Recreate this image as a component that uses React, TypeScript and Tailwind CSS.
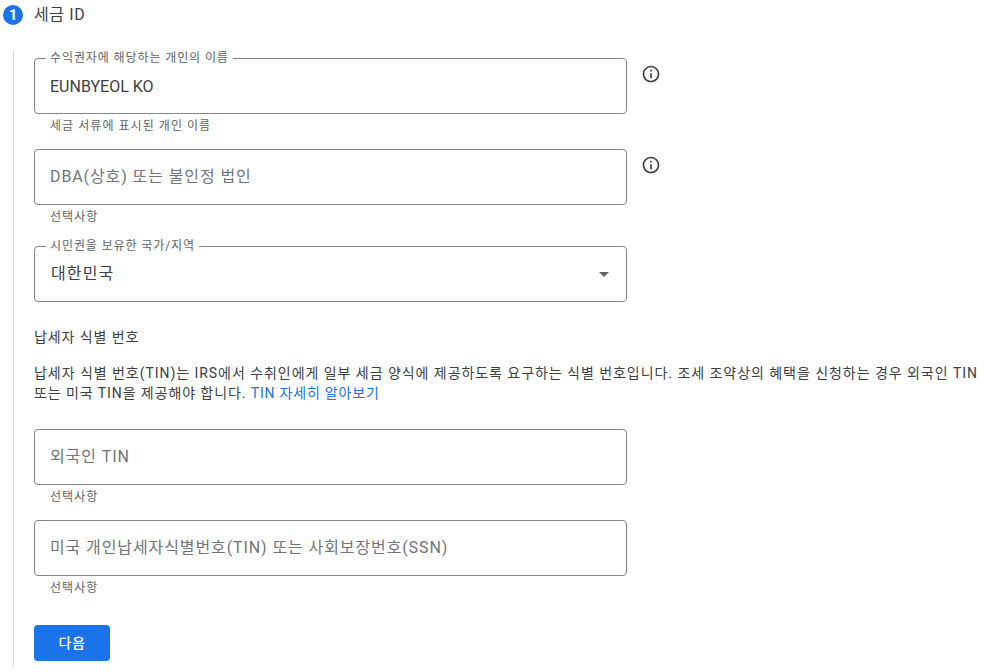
import React from 'react';

interface TaxFieldProps {
  label?: string;
  value?: string;
  placeholder?: string;
  helper?: string;
  info?: boolean;
  select?: boolean;
  className?: string;
}

const InfoIcon = () => (
  <svg width="20" height="20" viewBox="0 0 24 24" fill="#3c4043">
    <path d="M11 7h2v2h-2zm0 4h2v6h-2zm1-9C6.48 2 2 6.48 2 12s4.48 10 10 10 10-4.48 10-10S17.52 2 12 2zm0 18c-4.41 0-8-3.59-8-8s3.59-8 8-8 8 3.59 8 8-3.59 8-8 8z" />
  </svg>
);

const TaxField = ({ label, value, placeholder, helper, info, select, className }: TaxFieldProps) => (
  <div className={className}>
    <div className="flex items-start">
      <div className="relative flex h-[56px] w-[593px] items-center justify-between rounded border border-[#80868b] pl-[15px] pr-[17px]">
        {label && (
          <span className="absolute left-[11px] top-[-9px] bg-white px-[4px] text-[12px] leading-[16px] tracking-[0.9px] text-[#5f6368]">
            {label}
          </span>
        )}
        {/* the latin-only value sits 1px lower and has no extra spacing */}
        {value && !select && <span className="mt-[2px] text-[16px] leading-[24px] text-[#3c4043]">{value}</span>}
        {value && select && <span className="ml-[1px] text-[16px] leading-[24px] tracking-[1.1px] text-[#3c4043]">{value}</span>}
        {!value && <span className="text-[16px] leading-[24px] tracking-[0.9px] text-[#70757a]">{placeholder}</span>}
        {select && <span className="h-0 w-0 border-x-[5px] border-t-[5px] border-x-transparent border-t-[#5f6368]" />}
      </div>
      {info && (
        <span className="ml-[14px] mt-[6px] flex">
          <InfoIcon />
        </span>
      )}
    </div>
    {helper && <div className="mt-[4px] pl-[16px] text-[12px] leading-[16px] tracking-[1.05px] text-[#5f6368]">{helper}</div>}
  </div>
);

export default function App() {
  return (
    <div className="h-[672px] w-[984px] overflow-hidden bg-white font-['Roboto','Noto_Sans_CJK_KR',sans-serif] text-[#3c4043]">
      <div className="flex h-[30px] items-center pl-[3px]">
        <span className="flex h-[20px] w-[20px] items-center justify-center rounded-full bg-[#1a73e8] text-[15px] font-bold leading-none text-white">
          1
        </span>
        <span className="ml-[11px] text-[16px] leading-[24px] tracking-[0.6px]">세금 ID</span>
      </div>

      <div className="ml-[13px] mt-[20px] h-[617px] border-l border-[#dadce0] pl-[20px] pt-[8px]">
        <TaxField label="수익권자에 해당하는 개인의 이름" value="EUNBYEOL KO" helper="세금 서류에 표시된 개인 이름" info />
        <TaxField className="mt-[15px]" placeholder="DBA(상호) 또는 불인정 법인" helper="선택사항" info />
        <TaxField className="mt-[21px]" label="시민권을 보유한 국가/지역" value="대한민국" select />

        <div className="mt-[25px] text-[14px] leading-[20px] tracking-[0.9px]">납세자 식별 번호</div>
        <div className="mt-[16px] whitespace-nowrap text-[14px] leading-[20px] tracking-[0.95px]">
          <p>납세자 식별 번호(TIN)는 IRS에서 수취인에게 일부 세금 양식에 제공하도록 요구하는 식별 번호입니다. 조세 조약상의 혜택을 신청하는 경우 외국인 TIN</p>
          <p>
            <span className="tracking-[0.9px]">또는 미국 TIN을 제공해야 합니다.</span>{' '}
            <a className="tracking-[0.8px] text-[#1a73e8]">TIN 자세히 알아보기</a>
          </p>
        </div>

        <TaxField className="mt-[26px]" placeholder="외국인 TIN" helper="선택사항" />
        <TaxField className="mt-[15px]" placeholder="미국 개인납세자식별번호(TIN) 또는 사회보장번호(SSN)" helper="선택사항" />

        <button className="mt-[29px] h-[36px] w-[76px] rounded bg-[#1a73e8] text-[14px] font-medium tracking-[0.5px] text-white">다음</button>
      </div>
    </div>
  );
}
